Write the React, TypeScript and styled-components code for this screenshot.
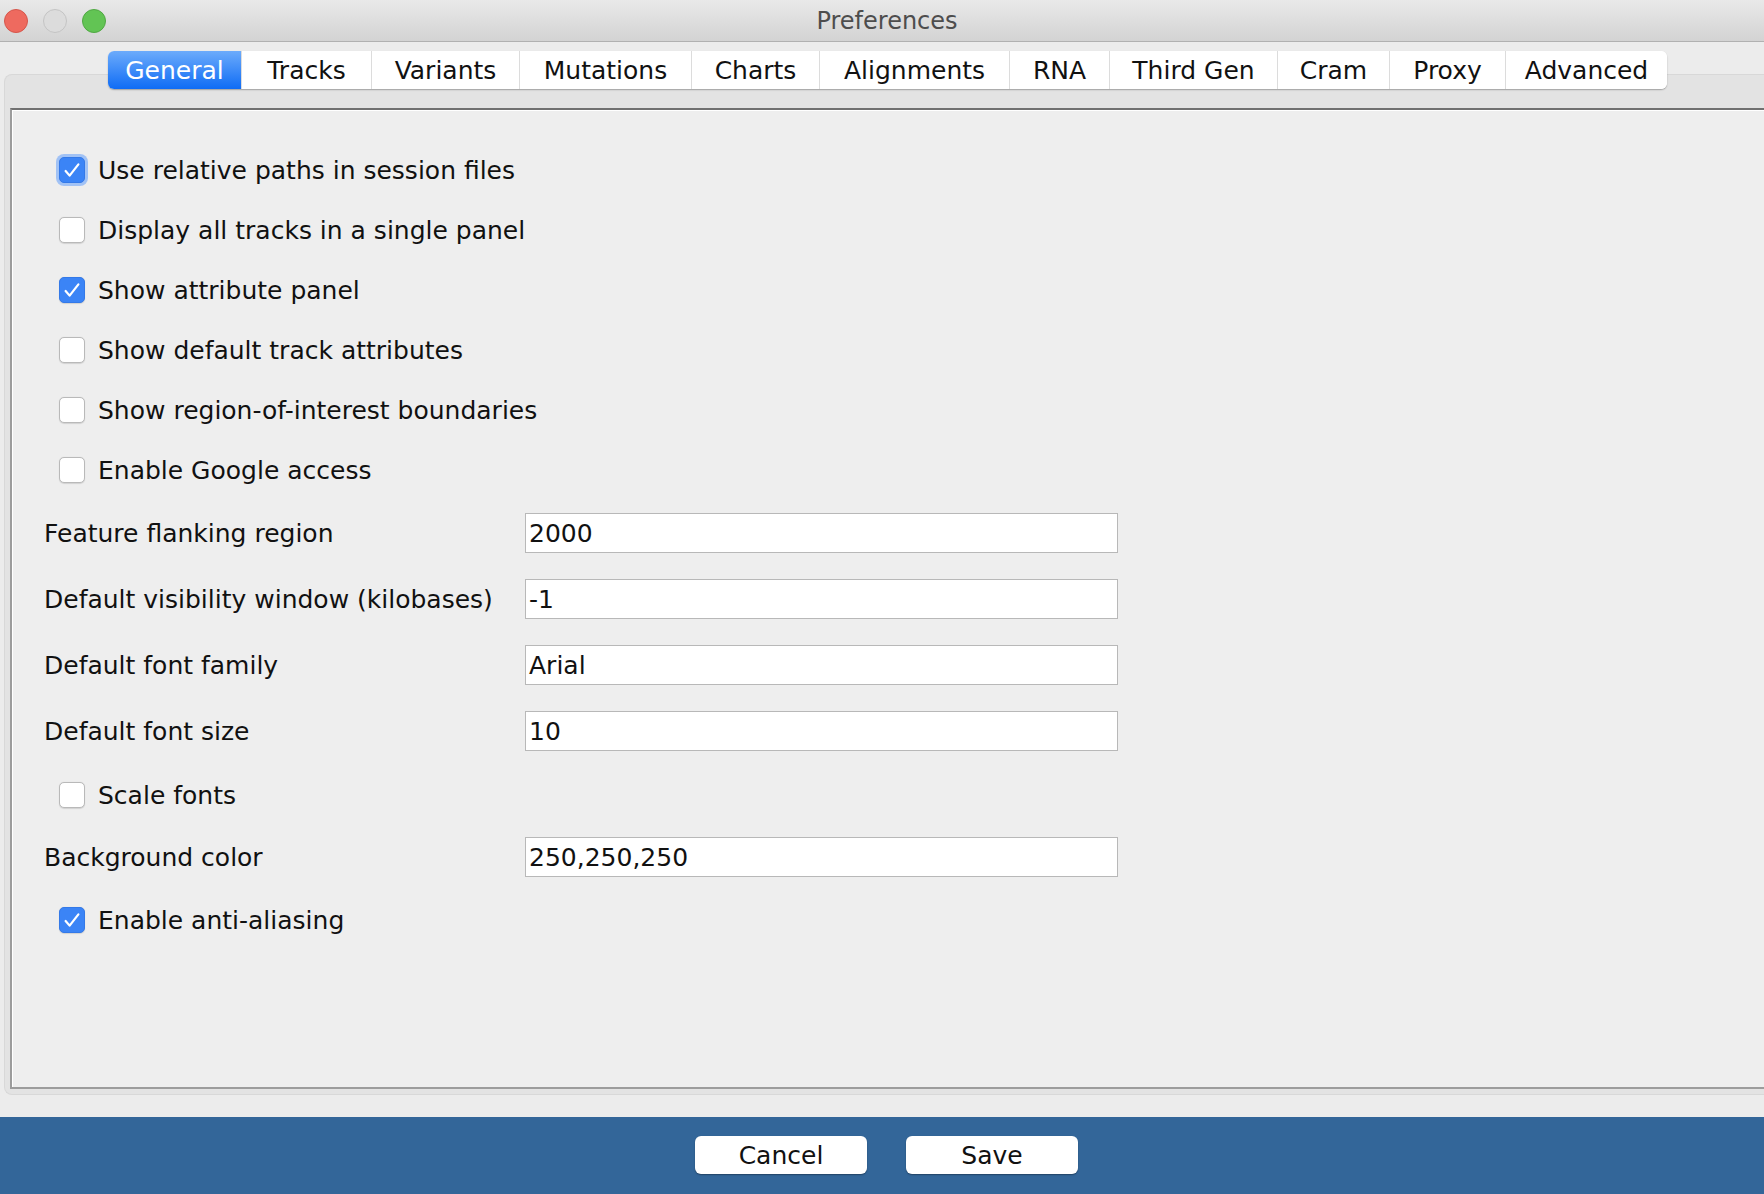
import React from 'react';
import styled, { createGlobalStyle } from 'styled-components';

const GlobalStyle = createGlobalStyle`
  html, body {
    margin: 0;
    padding: 0;
    background: #ececec;
    overflow: hidden;
  }
  * { box-sizing: border-box; }
`;

const font = `'DejaVu Sans', 'Noto Sans', sans-serif`;

const Window = styled.div`
  width: 1764px;
  height: 1194px;
  display: flex;
  flex-direction: column;
  background: #ececec;
  font-family: ${font};
  color: #111;
`;

const TitleBar = styled.div`
  height: 42px;
  flex-shrink: 0;
  display: flex;
  align-items: center;
  padding-left: 4px;
  background: linear-gradient(to bottom, #e9e9e9, #d3d3d3);
  border-bottom: 1px solid #b1b1b1;
`;

const Lights = styled.div`
  display: flex;
  gap: 15px;
`;

const Light = styled.span<{ $fill: string; $edge: string }>`
  width: 24px;
  height: 24px;
  border-radius: 50%;
  background: ${(p) => p.$fill};
  border: 1px solid ${(p) => p.$edge};
`;

const Title = styled.div`
  flex: 1;
  text-align: center;
  margin-left: -96px;
  font-size: 24px;
  color: #4d4d4d;
`;

const TabRow = styled.div`
  margin-top: 9px;
  height: 38px;
  flex-shrink: 0;
  display: flex;
  padding-left: 108px;
  position: relative;
  z-index: 1;
`;

const TabGroup = styled.div`
  display: flex;
  background: #fff;
  border-radius: 6px;
  box-shadow: 0 1px 1.5px rgba(0, 0, 0, 0.3);
  overflow: hidden;
`;

const Tab = styled.div<{ $active?: boolean; $w: number }>`
  width: ${(p) => p.$w}px;
  height: 38px;
  display: flex;
  align-items: center;
  justify-content: center;
  font-size: 25px;
  color: ${(p) => (p.$active ? '#fff' : '#111')};
  background: ${(p) => (p.$active ? 'linear-gradient(to bottom, #6cabfb, #0f6cf5)' : '#fff')};
  & + & {
    border-left: 1px solid #dcdcdc;
  }
`;

const Pane = styled.div`
  flex: 1;
  margin: -15px 0 22px 4px;
  padding: 33px 0 5px 5px;
  background: #e3e3e3;
  border: 1px solid #d8d8d8;
  border-right: none;
  border-radius: 8px 0 0 8px;
  display: flex;
`;

const Content = styled.div`
  flex: 1;
  display: flex;
  flex-direction: column;
  padding-top: 30px;
  background: #eeeeee;
  border-top: 2px solid #707070;
  border-left: 2px solid #9c9c9c;
  border-bottom: 2px solid #9c9c9c;
  box-shadow: inset 1px 1px 0 #fff;
`;

const Row = styled.div<{ $h: number; $indent: number }>`
  height: ${(p) => p.$h}px;
  flex-shrink: 0;
  display: flex;
  align-items: center;
  padding-left: ${(p) => p.$indent}px;
  font-size: 25px;
`;

const Box = styled.span<{ $checked?: boolean; $focus?: boolean }>`
  width: 26px;
  height: 26px;
  margin-right: 13px;
  border-radius: 5px;
  display: flex;
  align-items: center;
  justify-content: center;
  background: ${(p) => (p.$checked ? '#3b84f6' : '#fff')};
  border: 1px solid ${(p) => (p.$checked ? '#3479e8' : '#b9b9b9')};
  box-shadow: ${(p) =>
    p.$focus ? '0 0 0 3px rgba(110, 165, 250, 0.6)' : '0 0.5px 1px rgba(0,0,0,0.12)'};
`;

const Label = styled.span`
  width: 481px;
  flex-shrink: 0;
`;

const Field = styled.div`
  width: 593px;
  height: 40px;
  display: flex;
  align-items: center;
  padding-left: 3px;
  background: #fff;
  border: 1px solid #b8b8b8;
  font-size: 25px;
`;

const Footer = styled.div`
  height: 77px;
  flex-shrink: 0;
  background: #336699;
  display: flex;
  justify-content: center;
  align-items: flex-start;
  padding: 19px 0 0 9px;
  gap: 39px;
`;

const Button = styled.div`
  width: 172px;
  height: 38px;
  background: #fff;
  border-radius: 6px;
  box-shadow: 0 1px 1.5px rgba(0, 0, 0, 0.35);
  display: flex;
  align-items: center;
  justify-content: center;
  font-size: 25px;
  color: #111;
`;

const Check = () => (
  <svg width="18" height="18" viewBox="0 0 18 18">
    <path d="M2.6 10 L6.6 14.6 L15.4 3.4" fill="none" stroke="#fff" strokeWidth="2.2" strokeLinecap="round" strokeLinejoin="round" />
  </svg>
);

const tabs: [string, number][] = [
  ['General', 133],
  ['Tracks', 130],
  ['Variants', 148],
  ['Mutations', 172],
  ['Charts', 128],
  ['Alignments', 190],
  ['RNA', 100],
  ['Third Gen', 168],
  ['Cram', 112],
  ['Proxy', 116],
  ['Advanced', 162],
];

const CheckRow = ({ label, checked, focus, h = 60 }: { label: string; checked?: boolean; focus?: boolean; h?: number }) => (
  <Row $h={h} $indent={47}>
    <Box $checked={checked} $focus={focus}>{checked && <Check />}</Box>
    {label}
  </Row>
);

const FieldRow = ({ label, value, h = 66 }: { label: string; value: string; h?: number }) => (
  <Row $h={h} $indent={32}>
    <Label>{label}</Label>
    <Field>{value}</Field>
  </Row>
);

export default function App() {
  return (
    <>
      <GlobalStyle />
      <Window>
        <TitleBar>
          <Lights>
            <Light $fill="#ee6a5f" $edge="#d5564b" />
            <Light $fill="#dcdcdc" $edge="#c4c4c4" />
            <Light $fill="#62c454" $edge="#50a843" />
          </Lights>
          <Title>Preferences</Title>
        </TitleBar>

        <TabRow>
          <TabGroup>
            {tabs.map(([name, w], i) => (
              <Tab key={name} $w={w} $active={i === 0}>
                {name}
              </Tab>
            ))}
          </TabGroup>
        </TabRow>

        <Pane>
          <Content>
            <CheckRow label="Use relative paths in session files" checked focus />
            <CheckRow label="Display all tracks in a single panel" />
            <CheckRow label="Show attribute panel" checked />
            <CheckRow label="Show default track attributes" />
            <CheckRow label="Show region-of-interest boundaries" />
            <CheckRow label="Enable Google access" />
            <FieldRow label="Feature flanking region" value="2000" />
            <FieldRow label="Default visibility window (kilobases)" value="-1" />
            <FieldRow label="Default font family" value="Arial" />
            <FieldRow label="Default font size" value="10" />
            <CheckRow label="Scale fonts" h={62} />
            <FieldRow label="Background color" value="250,250,250" h={62} />
            <CheckRow label="Enable anti-aliasing" checked h={64} />
          </Content>
        </Pane>

        <Footer>
          <Button>Cancel</Button>
          <Button>Save</Button>
        </Footer>
      </Window>
    </>
  );
}
